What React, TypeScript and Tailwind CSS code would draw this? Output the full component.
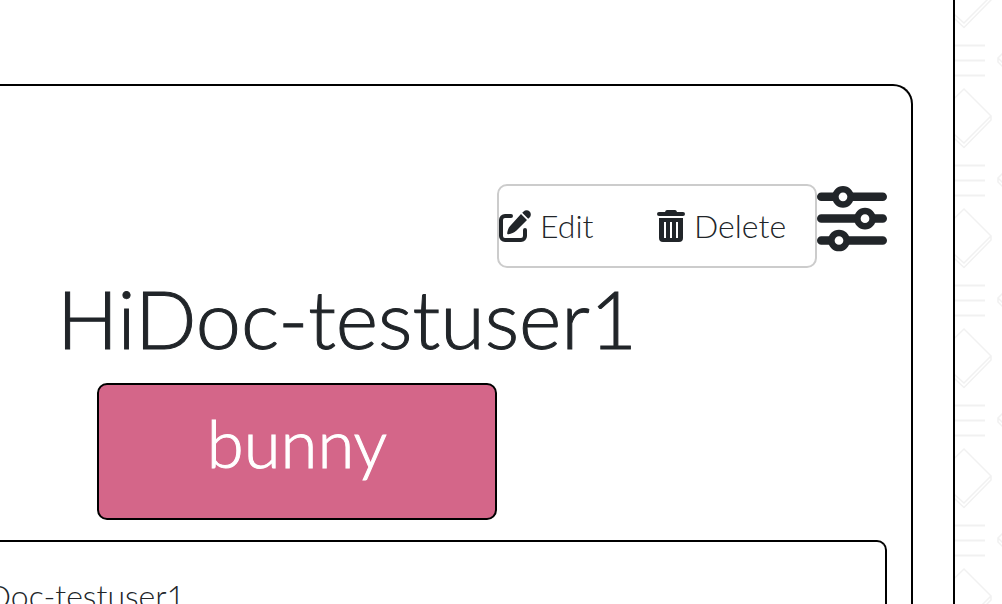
import React from "react";

function EditIcon() {
  return (
    <svg className="h-8 w-8 shrink-0" viewBox="0 0 32 32" aria-hidden="true">
      <path d="M12 6H6a4 4 0 0 0-4 4v16a4 4 0 0 0 4 4h16a4 4 0 0 0 4-4v-6" fill="none" stroke="currentColor" strokeWidth="4" strokeLinecap="round" />
      <path d="M22 4l6 6L17.500 20.500c-2.500 2.500-5 3.200-8 3.800-.9.2-1.500-.4-1.300-1.300.6-3 1.300-5.500 3.800-8z" fill="currentColor" />
      <path d="M23.200 2.800l1.400-1.400a4.200 4.200 0 0 1 6 6L29.200 8.800z" fill="currentColor" />
    </svg>
  );
}

function TrashIcon() {
  return (
    <svg className="h-8 w-7 shrink-0" viewBox="0 0 28 32" aria-hidden="true">
      <path d="M10 0h8q1.500 0 2 2h6a2 2 0 0 1 0 4H2a2 2 0 0 1 0-4h6q.5-2 2-2z" fill="currentColor" />
      <path fillRule="evenodd" d="M2 8h24v20a4 4 0 0 1-4 4H6a4 4 0 0 1-4-4zM7 12v16h2V12zM13 12v16h2V12zM19 12v16h2V12z" fill="currentColor" />
    </svg>
  );
}

function SlidersIcon() {
  return (
    <svg className="h-[68px] w-[70px]" viewBox="0 0 70 68" aria-hidden="true">
      <path d="M4.300 12.800h61.400M4.300 34.500h61.400M4.300 56.500h61.400" stroke="currentColor" strokeWidth="8.600" strokeLinecap="round" />
      <g fill="white" stroke="currentColor" strokeWidth="6.500">
        <circle cx="26" cy="12.800" r="7.600" />
        <circle cx="48" cy="34.700" r="7.600" />
        <circle cx="22" cy="56.500" r="7.600" />
      </g>
    </svg>
  );
}

function PatternStrip() {
  return (
    <svg className="h-full w-full" aria-hidden="true">
      <defs>
        <pattern id="tile" width="120" height="120" patternUnits="userSpaceOnUse">
          <g fill="none" stroke="#f1f1f1" strokeWidth="2">
            <path d="M0 45.500h30M0 60.500h30M0 75.500h30" />
            <g strokeWidth="1.500">
              <path d="M-20 117L9 89l27 27L9 143l-29-26M36 116v4L9 147.500" />
              <path d="M-20 -3L9 23l27-27v4L9 27.500L-20 0" />
              <path d="M50 51l-7 7 7 7M43 58v4l7 7" />
            </g>
          </g>
        </pattern>
      </defs>
      <rect width="100%" height="100%" fill="url(#tile)" />
    </svg>
  );
}

export default function App() {
  return (
    <div className="flex h-screen overflow-hidden bg-white font-['Lato',sans-serif] font-light text-[#212529]">
      <main className="min-w-0 flex-1 border-r-2 border-black pt-[84px] pr-10">
        <section className="h-full rounded-tr-[20px] border-t-2 border-r-2 border-black pt-[98px] pr-6">
          <div className="flex items-start justify-end">
            <div className="flex h-[84px] w-80 items-center rounded-[10px] border-2 border-[#ccc] text-[32px] leading-10">
              <button className="flex w-[158px] items-center gap-[9px]">
                <EditIcon />
                Edit
              </button>
              <button className="flex items-center gap-[9px]">
                <TrashIcon />
                Delete
              </button>
            </div>
            <button aria-label="Options">
              <SlidersIcon />
            </button>
          </div>
          <h1 className="pl-[57px] text-[81px] leading-[100px] [-webkit-text-stroke:1px_currentColor]">HiDoc-testuser1</h1>
          <button className="mt-[15px] ml-[97px] block h-[137px] w-[400px] rounded-[10px] border-2 border-black bg-[#d46689] pb-5 text-[67px] leading-[80px] text-white [-webkit-text-stroke:1px_currentColor]">
            bunny
          </button>
          <div className="mt-5 overflow-hidden rounded-tr-[10px] border-t-2 border-r-2 border-black pt-[34px] pb-10">
            <p className="-ml-11 text-[32px] leading-10">HiDoc-testuser1</p>
          </div>
        </section>
      </main>
      <aside className="w-[47px] shrink-0">
        <PatternStrip />
      </aside>
    </div>
  );
}
